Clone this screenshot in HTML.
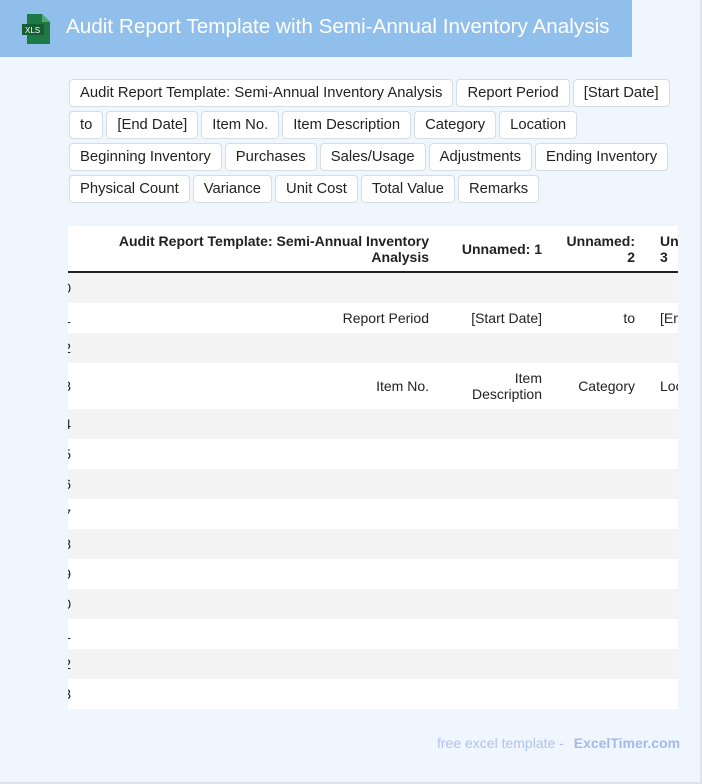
<!DOCTYPE html>
<html><head><style>
body{margin:0;width:702px;height:784px;background:#f0f6fe;font-family:"Liberation Sans",sans-serif;position:relative;overflow:hidden}
.frame{position:absolute;left:0;top:0;width:700px;height:782px;border-right:2px solid #dde3ea;border-bottom:2px solid #dde3ea}
.hdr{position:absolute;left:0;top:0;width:632px;height:57px;background:#90bfeb}
.hdr h1{position:absolute;left:66px;top:15px;margin:0;font-size:20.7px;font-weight:normal;color:#fff;white-space:nowrap}
.tags{position:absolute;left:69px;top:79px;width:612px;display:flex;flex-wrap:wrap;gap:4px 3px}
.tag{height:26px;line-height:26px;padding:0 10px;background:#fff;border:1px solid #d6dce3;border-radius:4px;font-size:14.8px;color:#222;white-space:nowrap}
.tw{position:absolute;left:68px;top:226px;width:610px;height:483px;background:#fff;overflow:hidden}
table{border-collapse:collapse;table-layout:fixed;width:724px;position:absolute;left:-29px;top:0;font-size:14px;color:#222}
td,th{padding:0 8px;text-align:right;vertical-align:middle;white-space:nowrap;overflow:hidden}
th{height:45px;font-weight:bold;border-bottom:2px solid #222;line-height:16px}
tr.r td{height:30px}
tr.t td{height:46px;line-height:16px}
tbody tr:nth-child(odd){background:#f4f4f4}
.c4{text-align:left;padding-left:17px}
.foot{position:absolute;left:437px;top:735px;font-size:14px;color:#aec2ef}
.foot b{color:#a3b9ee;margin-left:6px}
</style></head><body>
<div class="frame"></div>
<div class="hdr">
<svg style="position:absolute;left:22px;top:14px" width="28" height="30" viewBox="0 0 28 30"><path d="M5 0H20L28 8V30H5Z" fill="#1e7a45"/><path d="M20 0V8H28Z" fill="#4fa872"/><rect x="0" y="10" width="22" height="11" fill="#155e34"/><text x="3" y="19" font-size="8" fill="#fff" font-family="Liberation Sans">XLS</text></svg>
<h1>Audit Report Template with Semi-Annual Inventory Analysis</h1></div>
<div class="tags">
<span class="tag">Audit Report Template: Semi-Annual Inventory Analysis</span><span class="tag">Report Period</span><span class="tag">[Start Date]</span>
<span class="tag">to</span><span class="tag">[End Date]</span><span class="tag">Item No.</span><span class="tag">Item Description</span><span class="tag">Category</span><span class="tag">Location</span>
<span class="tag">Beginning Inventory</span><span class="tag">Purchases</span><span class="tag">Sales/Usage</span><span class="tag">Adjustments</span><span class="tag">Ending Inventory</span>
<span class="tag">Physical Count</span><span class="tag">Variance</span><span class="tag">Unit Cost</span><span class="tag">Total Value</span><span class="tag">Remarks</span>
</div>
<div class="tw"><table>
<colgroup><col style="width:40px"><col style="width:358px"><col style="width:113px"><col style="width:93px"><col style="width:120px"></colgroup>
<thead><tr><th></th><th>Audit Report Template: Semi-Annual Inventory<br>Analysis</th><th>Unnamed: 1</th><th>Unnamed:<br>2</th><th class="c4">Unnamed:<br>3</th></tr></thead>
<tbody>
<tr class="r"><td>10</td><td></td><td></td><td></td><td></td></tr>
<tr class="r"><td>11</td><td>Report Period</td><td>[Start Date]</td><td>to</td><td class="c4">[End Date]</td></tr>
<tr class="r"><td>12</td><td></td><td></td><td></td><td></td></tr>
<tr class="t"><td>13</td><td>Item No.</td><td style="white-space:normal">Item<br>Description</td><td>Category</td><td class="c4">Location</td></tr>
<tr class="r"><td>14</td><td></td><td></td><td></td><td></td></tr>
<tr class="r"><td>15</td><td></td><td></td><td></td><td></td></tr>
<tr class="r"><td>16</td><td></td><td></td><td></td><td></td></tr>
<tr class="r"><td>17</td><td></td><td></td><td></td><td></td></tr>
<tr class="r"><td>18</td><td></td><td></td><td></td><td></td></tr>
<tr class="r"><td>19</td><td></td><td></td><td></td><td></td></tr>
<tr class="r"><td>20</td><td></td><td></td><td></td><td></td></tr>
<tr class="r"><td>21</td><td></td><td></td><td></td><td></td></tr>
<tr class="r"><td>22</td><td></td><td></td><td></td><td></td></tr>
<tr class="r"><td>23</td><td></td><td></td><td></td><td></td></tr>
</tbody></table></div>
<div class="foot">free excel template - <b>ExcelTimer.com</b></div>
</body></html>
